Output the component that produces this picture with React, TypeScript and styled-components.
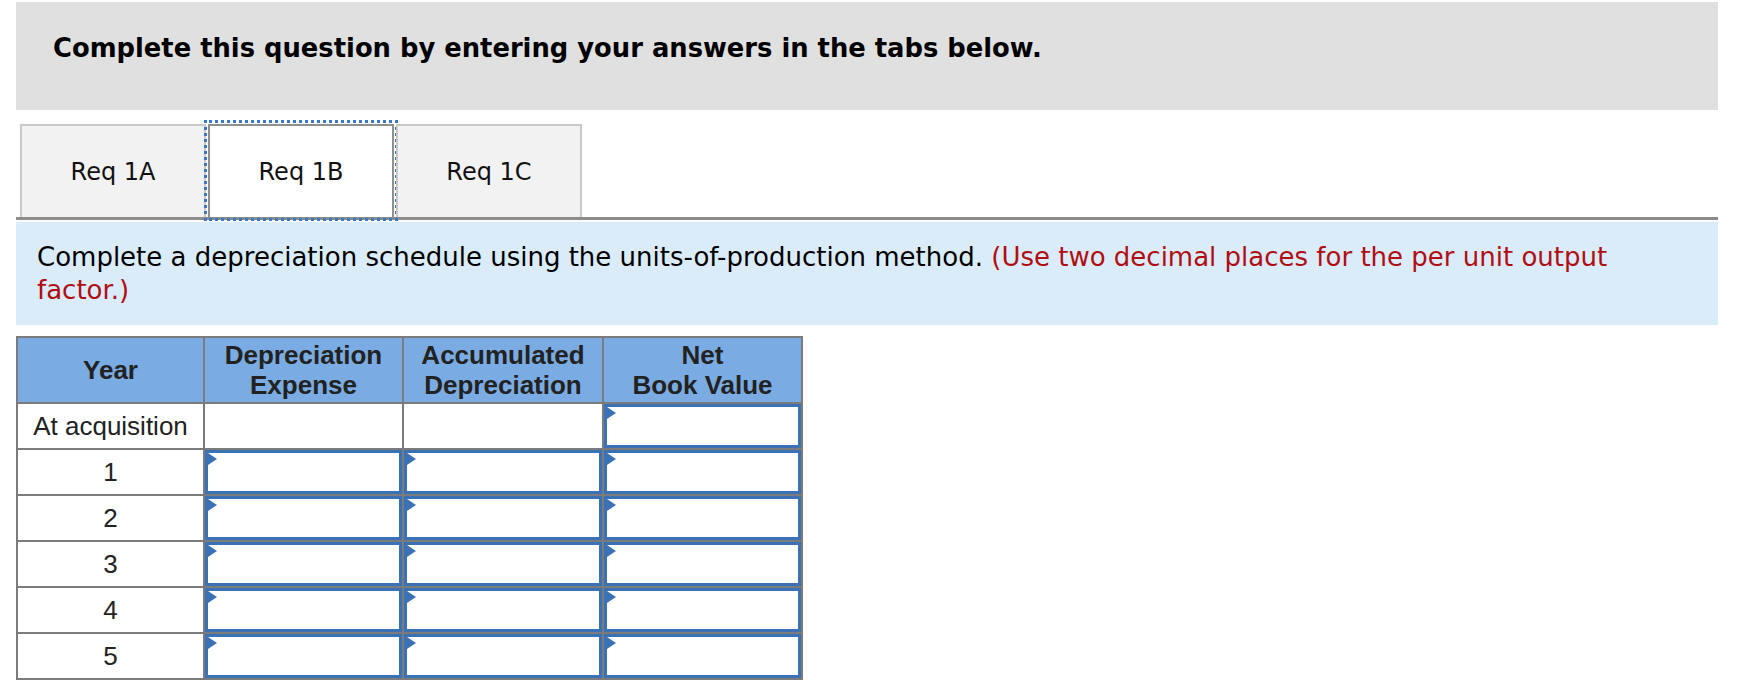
import React from 'react';
import styled, { createGlobalStyle } from 'styled-components';

const GlobalStyle = createGlobalStyle`
  html, body {
    margin: 0;
    padding: 0;
    background: #ffffff;
  }
  body {
    font-family: "DejaVu Sans", Verdana, sans-serif;
    color: #111111;
  }
`;

const Page = styled.div`
  width: 1702px;
  padding: 2px 0 0 16px;
`;

const Banner = styled.div`
  height: 108px;
  background: #e0e0e0;
  padding: 31px 0 0 37px;
  box-sizing: border-box;
  font-weight: bold;
  font-size: 25.8px;
  color: #000;
`;

const TabBar = styled.div`
  display: flex;
  gap: 2px;
  margin-top: 14px;
  padding-left: 4px;
  border-bottom: 3px solid #8c8c8c;
`;

const Tab = styled.div<{ $active?: boolean }>`
  width: 186px;
  height: 93px;
  box-sizing: border-box;
  display: flex;
  align-items: center;
  justify-content: center;
  font-size: 24px;
  color: #111;
  background: ${(p) => (p.$active ? '#ffffff' : '#f2f2f2')};
  border: 2px solid ${(p) => (p.$active ? '#8f8f8f' : '#c8c8c8')};
  border-bottom: none;
  outline: ${(p) => (p.$active ? '3px dotted #3a78c9' : 'none')};
  outline-offset: 1px;
`;

const Instructions = styled.div`
  background: #daecf9;
  margin-top: 2px;
  padding: 19px 48px 18px 21px;
  font-size: 26px;
  line-height: 33px;
  color: #000;
`;

const Hint = styled.span`
  color: #b10d12;
`;

const Schedule = styled.table`
  margin-top: 11px;
  border-collapse: collapse;
  font-family: "Liberation Sans", Arial, sans-serif;
  font-size: 26px;
  color: #222;
`;

const HeadCell = styled.th<{ $w: number }>`
  width: ${(p) => p.$w}px;
  height: 64px;
  padding: 0;
  background: #7aace3;
  border: 2px solid #7b7b7b;
  font-weight: bold;
  line-height: 30px;
  text-align: center;
`;

const YearCell = styled.td`
  height: 44px;
  padding: 0;
  border: 2px solid #7b7b7b;
  text-align: center;
  background: #fff;
`;

const BlankCell = styled.td`
  padding: 0;
  border: 2px solid #7b7b7b;
  background: #fff;
`;

const EntryCell = styled.td`
  padding: 0;
  border: 2px solid #7b7b7b;
  background: #fff;
`;

const Field = styled.div`
  position: relative;
  height: 44px;
  box-sizing: border-box;
  border: 3px solid #3b72b5;
  &::before {
    content: '';
    position: absolute;
    top: 0;
    left: 0;
    border-left: 9px solid #3b72b5;
    border-top: 6px solid transparent;
    border-bottom: 6px solid transparent;
  }
`;

const years = ['1', '2', '3', '4', '5'];

export default function App() {
  return (
    <>
      <GlobalStyle />
      <Page>
        <Banner>Complete this question by entering your answers in the tabs below.</Banner>
        <TabBar>
          <Tab>Req 1A</Tab>
          <Tab $active>Req 1B</Tab>
          <Tab>Req 1C</Tab>
        </TabBar>
        <Instructions>
          Complete a depreciation schedule using the units-of-production method.{' '}
          <Hint>(Use two decimal places for the per unit output factor.)</Hint>
        </Instructions>
        <Schedule>
          <thead>
            <tr>
              <HeadCell $w={185}>Year</HeadCell>
              <HeadCell $w={197}>
                Depreciation
                <br />
                Expense
              </HeadCell>
              <HeadCell $w={198}>
                Accumulated
                <br />
                Depreciation
              </HeadCell>
              <HeadCell $w={197}>
                Net
                <br />
                Book Value
              </HeadCell>
            </tr>
          </thead>
          <tbody>
            <tr>
              <YearCell>At acquisition</YearCell>
              <BlankCell />
              <BlankCell />
              <EntryCell>
                <Field />
              </EntryCell>
            </tr>
            {years.map((y) => (
              <tr key={y}>
                <YearCell>{y}</YearCell>
                <EntryCell>
                  <Field />
                </EntryCell>
                <EntryCell>
                  <Field />
                </EntryCell>
                <EntryCell>
                  <Field />
                </EntryCell>
              </tr>
            ))}
          </tbody>
        </Schedule>
      </Page>
    </>
  );
}
